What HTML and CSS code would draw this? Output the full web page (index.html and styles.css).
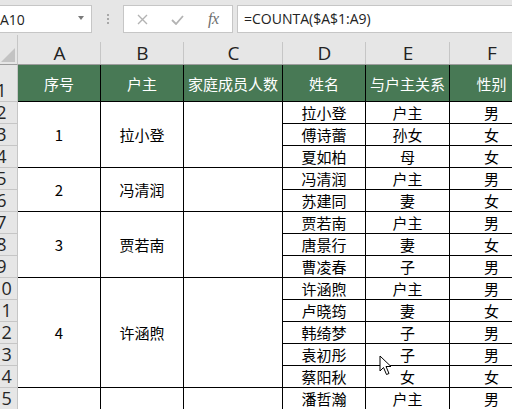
FILE: index.html
```html
<!DOCTYPE html>
<html lang="zh">
<head>
<meta charset="utf-8">
<link rel="stylesheet" href="styles.css">
</head>
<body>
<div class="app">
  <div class="topbar">
    <div class="namebox"><span class="nb-text">A10</span><span class="nb-arrow"></span></div>
    <div class="grip"><i></i><i></i><i></i></div>
    <div class="fbtns">
      <svg class="ico-x" width="11" height="11" viewBox="0 0 11 11"><path d="M1 1L10 10M10 1L1 10" stroke="#b3b3b3" stroke-width="1.4" fill="none"/></svg>
      <svg class="ico-ok" width="13" height="10" viewBox="0 0 13 10"><path d="M1 5L5 9L12 1" stroke="#b3b3b3" stroke-width="1.8" fill="none"/></svg>
      <span class="ico-fx">fx</span>
    </div>
    <div class="formula">=COUNTA($A$1:A9)</div>
  </div>

  <div class="sheet">
    <div class="corner"><span class="tri"></span></div>
    <div class="ch">A</div><div class="ch">B</div><div class="ch">C</div><div class="ch">D</div><div class="ch">E</div><div class="ch">F</div>

    <div class="rh tall">1</div>
    <div class="hd">序号</div><div class="hd">户主</div><div class="hd">家庭成员人数</div><div class="hd">姓名</div><div class="hd">与户主关系</div><div class="hd">性别</div>

    <div class="rh">2</div>
    <div class="c m3">1</div><div class="c m3">拉小登</div><div class="c m3"></div>
    <div class="c">拉小登</div><div class="c">户主</div><div class="c">男</div>
    <div class="rh">3</div><div class="c">傅诗蕾</div><div class="c">孙女</div><div class="c">女</div>
    <div class="rh">4</div><div class="c">夏如柏</div><div class="c">母</div><div class="c">女</div>

    <div class="rh">5</div>
    <div class="c m2">2</div><div class="c m2">冯清润</div><div class="c m2"></div>
    <div class="c">冯清润</div><div class="c">户主</div><div class="c">男</div>
    <div class="rh">6</div><div class="c">苏建同</div><div class="c">妻</div><div class="c">女</div>

    <div class="rh">7</div>
    <div class="c m3">3</div><div class="c m3">贾若南</div><div class="c m3"></div>
    <div class="c">贾若南</div><div class="c">户主</div><div class="c">男</div>
    <div class="rh">8</div><div class="c">唐景行</div><div class="c">妻</div><div class="c">女</div>
    <div class="rh">9</div><div class="c">曹凌春</div><div class="c">子</div><div class="c">男</div>

    <div class="rh">10</div>
    <div class="c m5">4</div><div class="c m5">许涵煦</div><div class="c m5"></div>
    <div class="c">许涵煦</div><div class="c">户主</div><div class="c">男</div>
    <div class="rh">11</div><div class="c">卢晓筠</div><div class="c">妻</div><div class="c">女</div>
    <div class="rh">12</div><div class="c">韩绮梦</div><div class="c">子</div><div class="c">男</div>
    <div class="rh">13</div><div class="c">袁初彤</div><div class="c">子</div><div class="c">男</div>
    <div class="rh">14</div><div class="c">蔡阳秋</div><div class="c">女</div><div class="c">女</div>

    <div class="rh">15</div>
    <div class="c open"></div><div class="c open"></div><div class="c open"></div>
    <div class="c">潘哲瀚</div><div class="c">户主</div><div class="c">男</div>
  </div>

  <svg class="cursor" width="14" height="21" viewBox="0 0 14 21"><path d="M1 1L1 16L4.5 12.5L7.5 19.5L10 18.5L7 11.5L12 11.5Z" fill="#fff" stroke="#000" stroke-width="1" stroke-linejoin="round"/></svg>
</div>
</body>
</html>
```

FILE: styles.css
```css
html, body {
  margin: 0;
  padding: 0;
  background: #fff;
}
body {
  width: 512px;
  height: 409px;
  overflow: hidden;
}
.app {
  position: relative;
  width: 512px;
  height: 409px;
  overflow: hidden;
  font-family: "Noto Sans CJK SC", "Noto Sans", sans-serif;
}

/* formula bar */
.topbar {
  height: 35px;
  box-sizing: border-box;
  padding-top: 5px;
  background: #e6e6e6;
  display: flex;
  align-items: flex-start;
}
.namebox {
  width: 97px;
  height: 28px;
  margin-left: -5px;
  box-sizing: border-box;
  border: 1px solid #c6c6c6;
  background: #fff;
  display: flex;
  align-items: center;
  justify-content: space-between;
  padding: 0 7px 0 4px;
  font-family: "Open Sans", "Noto Sans", sans-serif;
  font-size: 14px;
  color: #222;
}
.nb-arrow {
  width: 0;
  height: 0;
  border-left: 3.5px solid transparent;
  border-right: 3.5px solid transparent;
  border-top: 4px solid #7a7a7a;
  margin-top: -2px;
}
.grip {
  width: 31px;
  height: 28px;
  display: flex;
  flex-direction: column;
  align-items: center;
  justify-content: center;
  gap: 2px;
}
.grip i {
  display: block;
  width: 2px;
  height: 2px;
  background: #a8a8a8;
}
.fbtns {
  width: 110px;
  height: 28px;
  box-sizing: border-box;
  border: 1px solid #c6c6c6;
  background: #fff;
  display: flex;
  align-items: center;
  padding-left: 13px;
}
.ico-x { margin-right: 23px; }
.ico-ok { margin-right: 24px; margin-top: 2px; }
.ico-fx {
  font-family: "Liberation Serif", serif;
  font-style: italic;
  font-size: 16px;
  color: #6e6e6e;
  letter-spacing: -0.5px;
}
.formula {
  flex: 1;
  height: 28px;
  margin-left: 4px;
  margin-right: -4px;
  box-sizing: border-box;
  border: 1px solid #c6c6c6;
  border-right: none;
  background: #fff;
  padding-left: 6px;
  font-family: "Open Sans", "Noto Sans", sans-serif;
  font-size: 14px;
  line-height: 25px;
  color: #222;
}

/* sheet grid */
.sheet {
  margin-left: -14px;
  display: grid;
  grid-template-columns: 32px 83px 83px 99px 83px 84px 84px;
  grid-template-rows: 30px 37px repeat(14, 22px);
  background: #fff;
}
.sheet > div {
  box-sizing: border-box;
}
.corner {
  background: #e6e6e6;
  position: relative;
  border-right: 1px solid #c6c6c6;
  border-bottom: 1px solid #9d9d9d;
  display: flex;
  justify-content: flex-end;
  align-items: flex-end;
  padding: 0 2px 2px 0;
}
.tri {
  width: 0;
  height: 0;
  border-left: 14px solid transparent;
  border-bottom: 14px solid #c3c3c3;
}
.ch {
  background: #e6e6e6;
  border-bottom: 1px solid #9d9d9d;
  display: flex;
  align-items: flex-end;
  justify-content: center;
  position: relative;
  font-family: "Open Sans", "Noto Sans", sans-serif;
  font-size: 19px;
  line-height: 22px;
  color: #222;
}
.ch::after {
  content: "";
  position: absolute;
  right: 0;
  bottom: 0;
  height: 22px;
  width: 1px;
  background: #c6c6c6;
}
.rh {
  background: #e6e6e6;
  border-right: 1px solid #c6c6c6;
  border-bottom: 1px solid #c6c6c6;
  display: flex;
  align-items: flex-end;
  justify-content: center;
  font-family: "Open Sans", "Noto Sans", sans-serif;
  font-size: 18px;
  line-height: 21px;
  color: #262626;
}
.hd {
  background: #487955;
  color: #fff;
  border-right: 1px solid #000;
  border-bottom: 1px solid #000;
  display: flex;
  align-items: center;
  justify-content: center;
  font-size: 15px;
  white-space: nowrap;
  overflow: hidden;
}
.c {
  border-right: 1px solid #000;
  border-bottom: 1px solid #000;
  display: flex;
  align-items: center;
  justify-content: center;
  font-size: 15px;
  color: #000;
  white-space: nowrap;
}
.m2 { grid-row: span 2; }
.m3 { grid-row: span 3; }
.m5 { grid-row: span 5; }
.open { border-bottom: none; }

.cursor {
  position: absolute;
  left: 379px;
  top: 355px;
}
```
